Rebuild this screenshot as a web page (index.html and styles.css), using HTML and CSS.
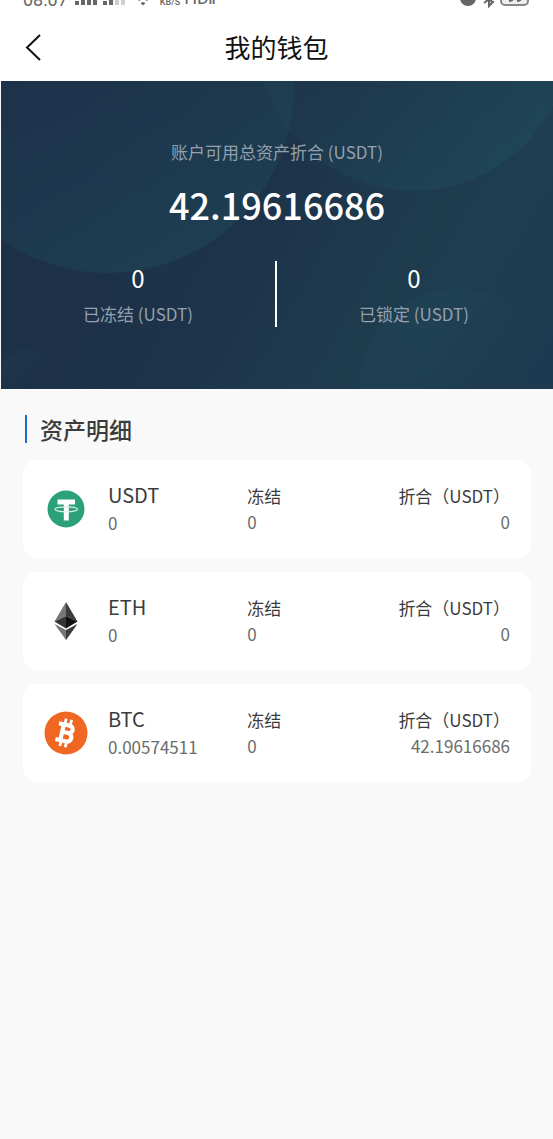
FILE: index.html
```html
<!DOCTYPE html>
<html lang="zh-CN">
<head>
<meta charset="utf-8">
<meta name="viewport" content="width=device-width, initial-scale=1">
<title>我的钱包</title>
<link rel="stylesheet" href="styles.css">
</head>
<body>
<div class="status">
  <span class="status-time">08:07</span>
  <svg class="status-signal" width="52" height="16" viewBox="0 0 52 16" aria-hidden="true">
    <g fill="#666"><path d="M0 9h4v4H0zM6 6h4v7H6zM12 3h4v10h-4zM18 0h4v13h-4zM28 9h4v4h-4zM34 6h4v7h-4z"/></g>
    <path d="M40 3h4v10h-4zM46 0h4v13h-4z" fill="#d0d0d0"/>
  </svg>
  <svg class="status-wifi" width="16" height="16" viewBox="0 0 16 16" aria-hidden="true">
    <path d="M2 7q6-5 12 0l-2 2q-4-3-8 0zM8 10l2.500 1L8 13.500 5.500 11z" fill="#666"/>
  </svg>
  <span class="status-rate">KB/S</span>
  <span class="status-hd">HD<small>ıı</small></span>
  <span class="status-right">
    <svg width="70" height="16" viewBox="0 0 70 16" aria-hidden="true">
      <circle cx="8" cy="6" r="8" fill="#666"/>
      <path d="M24 5l9 5-4 4V2M24 11l8-6" fill="none" stroke="#666" stroke-width="2"/>
      <rect x="41" y="-4" width="27" height="17" rx="4" fill="#eee" stroke="#888" stroke-width="2"/>
      <path d="M49 9q4 0 5-4M57 9q4 0 5-4" fill="none" stroke="#666" stroke-width="2"/>
    </svg>
  </span>
</div>

<header class="navbar">
  <button class="back" type="button" aria-label="返回">
    <svg width="18" height="28" viewBox="0 0 18 28" aria-hidden="true"><path d="M16 2L3 14.500 16 27" fill="none" stroke="#111" stroke-width="2"/></svg>
  </button>
  <h1 class="title">我的钱包</h1>
</header>

<section class="hero">
  <svg class="hero-art" viewBox="0 0 552 308" preserveAspectRatio="xMidYMid slice" aria-hidden="true">
    <defs>
      <linearGradient id="orb" x1="0.300" y1="0.300" x2="0.600" y2="1">
        <stop offset="0" stop-color="#23627a" stop-opacity="0.040"/>
        <stop offset="1" stop-color="#238080" stop-opacity="0.150"/>
      </linearGradient>
      <linearGradient id="orb-right" x1="0.300" y1="0.300" x2="0.600" y2="1">
        <stop offset="0" stop-color="#23627a" stop-opacity="0.040"/>
        <stop offset="1" stop-color="#238080" stop-opacity="0.120"/>
      </linearGradient>
      <linearGradient id="orb-low" x1="0" y1="0" x2="0.500" y2="0.600">
        <stop offset="0" stop-color="#2a7886" stop-opacity="0.090"/>
        <stop offset="1" stop-color="#2a7886" stop-opacity="0"/>
      </linearGradient>
    </defs>
    <circle cx="107" cy="6" r="186" fill="url(#orb)"/>
    <circle cx="412" cy="-47" r="157" fill="url(#orb-right)"/>
    <circle cx="458" cy="308" r="100" fill="url(#orb-low)"/>
    <circle cx="26" cy="296" r="28" fill="url(#orb-low)"/>
  </svg>
  <div class="hero-body">
    <p class="hero-label">账户可用总资产折合 (USDT)</p>
    <p class="hero-total">42.19616686</p>
    <div class="split">
      <div class="split-item"><span class="split-value">0</span><span class="hero-label">已冻结 (USDT)</span></div>
      <div class="split-item"><span class="split-value">0</span><span class="hero-label">已锁定 (USDT)</span></div>
    </div>
  </div>
</section>

<main class="assets">
  <h2 class="assets-title">资产明细</h2>
  <ul class="list">
    <li class="card">
      <svg class="coin" width="44" height="44" viewBox="0 0 44 44" aria-hidden="true">
        <circle cx="22" cy="22" r="18.500" fill="#2ba17b"/>
        <path d="M13.500 12.500h17.500v5h-6.200V33.500h-5V17.500h-6.300z" fill="#fff"/>
        <ellipse cx="22.300" cy="22.300" rx="11.300" ry="2.500" fill="none" stroke="#d5eee5" stroke-width="1.200"/>
      </svg>
      <div class="cell"><span class="name">USDT</span><span class="amount">0</span></div>
      <div class="cell compact"><span class="label">冻结</span><span class="amount">0</span></div>
      <div class="cell compact end"><span class="label">折合（USDT）</span><span class="amount">0</span></div>
    </li>
    <li class="card">
      <svg class="coin" width="44" height="44" viewBox="0 0 44 44" aria-hidden="true">
        <path d="M22 3L10.500 22.500 22 17z" fill="#777"/>
        <path d="M22 3l11.500 19.500L22 17z" fill="#3c3c3b"/>
        <path d="M22 17v12.500l-11.500-7z" fill="#343434"/>
        <path d="M22 17v12.500l11.500-7z" fill="#111"/>
        <path d="M10.500 25L22 31v10z" fill="#777"/>
        <path d="M33.500 25L22 31v10z" fill="#3c3c3b"/>
      </svg>
      <div class="cell"><span class="name">ETH</span><span class="amount">0</span></div>
      <div class="cell compact"><span class="label">冻结</span><span class="amount">0</span></div>
      <div class="cell compact end"><span class="label">折合（USDT）</span><span class="amount">0</span></div>
    </li>
    <li class="card">
      <svg class="coin" width="44" height="44" viewBox="0 0 44 44" aria-hidden="true">
        <circle cx="22" cy="22" r="21.500" fill="#f06724"/>
        <g transform="rotate(13 22 22)" fill="none" stroke="#fff">
          <path d="M13 14h11a3.800 3.800 0 0 1 0 7.600H18M24 21.600a4.300 4.300 0 0 1 0 8.600H13M18 14v16.200" stroke-width="4.200"/>
          <path d="M19 8v6M24.500 8v6M19 30v6M24.500 30v6" stroke-width="2.800"/>
        </g>
      </svg>
      <div class="cell"><span class="name">BTC</span><span class="amount">0.00574511</span></div>
      <div class="cell compact"><span class="label">冻结</span><span class="amount">0</span></div>
      <div class="cell compact end"><span class="label">折合（USDT）</span><span class="amount">42.19616686</span></div>
    </li>
  </ul>
</main>
</body>
</html>
```
FILE: styles.css
```css
* {
  box-sizing: border-box;
  margin: 0;
  padding: 0;
}

body {
  min-height: 100vh;
  background: #f9f9f9;
  color: #3c3c3c;
  font-family: "Noto Sans CJK SC", sans-serif;
  font-size: 17px;
}

.status {
  display: flex;
  align-items: flex-end;
  height: 8px;
  padding: 0 23px;
  overflow: hidden;
  background: #fff;
  color: #666;
  font-family: Roboto, sans-serif;
  font-size: 18px;
  line-height: 16px;
}

.status-signal {
  margin-left: 7px;
}

.status-wifi {
  margin-left: 8px;
}

.status-rate {
  margin-left: 9px;
  font-size: 9px;
  font-weight: 500;
  line-height: 12px;
}

.status-hd {
  margin-left: 4px;
}

.status-hd small {
  font-size: 12px;
  font-weight: 700;
}

.status-right {
  display: flex;
  margin-left: auto;
}

.navbar {
  display: grid;
  grid-template-columns: 50px 1fr 50px;
  align-items: center;
  height: 73px;
  padding-top: 4px;
  background: #fff;
}

.back {
  display: flex;
  justify-content: flex-end;
  padding: 0 8px 0 0;
  border: 0;
  background: none;
}

.title {
  color: #111;
  font-size: 26px;
  font-weight: 400;
  line-height: 38px;
  text-align: center;
}

.hero {
  position: relative;
  margin-left: 1px;
  overflow: hidden;
  background: linear-gradient(120deg, #1c2f48 0%, #1d3349 45%, #1f3e50 78%, #1d3950 100%);
  text-align: center;
}

.hero-art {
  position: absolute;
  inset: 0;
  width: 100%;
  height: 100%;
}

.hero-body {
  position: relative;
  padding: 58px 0 62px;
}

.hero-label {
  color: #94a0ad;
  font-size: 17px;
  line-height: 26px;
}

.hero-total {
  margin-top: 12px;
  color: #fff;
  font-size: 36px;
  font-weight: 500;
  line-height: 54px;
}

.split {
  display: flex;
  margin: 30px 2px 0 0;
}

.split-item {
  display: flex;
  flex: 1;
  flex-direction: column;
  height: 66px;
}

.split-item:first-child {
  border-right: 2px solid #fff;
}

.split-value {
  margin-bottom: 6px;
  color: #fff;
  font-size: 24px;
  line-height: 34px;
}

.assets {
  padding: 26px 22px 24px 23px;
}

.assets-title {
  margin-left: 2px;
  padding-left: 13px;
  border-left: 2px solid #1f6fc4;
  font-size: 23px;
  font-weight: 500;
  line-height: 28px;
}

.list {
  display: grid;
  gap: 14px;
  margin-top: 17px;
  list-style: none;
}

.card {
  display: grid;
  grid-template-columns: 48px 1fr 1fr 1fr;
  column-gap: 16px;
  align-items: center;
  padding: 21px;
  border-radius: 14px;
  background: #fff;
}

.coin {
  display: block;
}

.cell {
  display: flex;
  flex-direction: column;
  line-height: 28px;
}

.compact {
  line-height: 26px;
}

.end {
  align-items: flex-end;
  white-space: nowrap;
}

.name {
  font-size: 20px;
}

.amount {
  color: #6c6c6c;
}
```
